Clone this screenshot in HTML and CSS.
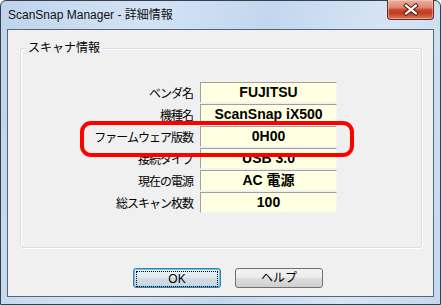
FILE: index.html
```html
<!DOCTYPE html>
<html lang="ja">
  <head>
    <meta charset="UTF-8" />
    <title>ScanSnap Manager - 詳細情報</title>
    <link rel="stylesheet" href="styles.css">
  </head>
  <body>
    <div class="window">
      <div class="titlebar">
        <span class="title">ScanSnap Manager - 詳細情報</span>
        <button class="close" aria-label="閉じる">
          <svg width="46" height="19" viewBox="0 0 46 19">
            <path d="M18.5 5.5 L28.5 13.5 M28.5 5.5 L18.5 13.5" stroke="#4a1a12" stroke-width="4.2" stroke-linecap="square" fill="none" />
            <path d="M18.5 5.5 L28.5 13.5 M28.5 5.5 L18.5 13.5" stroke="#ffffff" stroke-width="2.2" stroke-linecap="square" fill="none" />
          </svg>
        </button>
      </div>
      <div class="client">
        <div class="group">
          <span class="group-title">スキャナ情報</span>
          <div class="rows">
            <div class="label">ベンダ名</div>
            <div class="value">FUJITSU</div>
            <div class="label">機種名</div>
            <div class="value">ScanSnap iX500</div>
            <div class="label">ファームウェア版数</div>
            <div class="value">0H00</div>
            <div class="label">接続タイプ</div>
            <div class="value">USB 3.0</div>
            <div class="label">現在の電源</div>
            <div class="value">AC 電源</div>
            <div class="label">総スキャン枚数</div>
            <div class="value">100</div>
          </div>
        </div>
        <div class="buttons">
          <button class="btn btn-default"><span class="focus">OK</span></button>
          <button class="btn">ヘルプ</button>
        </div>
      </div>
      <div class="highlight"></div>
    </div>
  </body>
</html>
```

FILE: styles.css
```css
html, body {
  margin: 0;
  padding: 0;
  background-color: #ffffff;
}
body {
  font-family: "Liberation Sans", "Noto Sans CJK JP", sans-serif;
  font-size: 12px;
  color: #000;
}
.window {
  position: relative;
  width: 441px;
  height: 305px;
  box-sizing: border-box;
  border: 1px solid #3a3f47;
  border-radius: 6px 6px 0 0;
  padding: 0 6px 7px 6px;
  background: linear-gradient(100deg, #bed4ec 0%, #d3e3f5 30%, #c2d7ee 55%, #d6e5f5 80%, #c4d8ee 100%);
  display: flex;
  flex-direction: column;
}
.titlebar {
  height: 28px;
  display: flex;
  justify-content: space-between;
  align-items: flex-start;
}
.title {
  margin-left: 1px;
  line-height: 28px;
  font-size: 12px;
  color: #111;
}
.close {
  margin-top: -1px;
  width: 47px;
  height: 20px;
  padding: 0;
  border: 1px solid #6b2a20;
  border-top: none;
  border-radius: 0 0 4px 4px;
  background: linear-gradient(#eab0a3 0%, #dd8773 40%, #c8452b 52%, #c23d22 70%, #dc7a5e 100%);
  box-shadow: inset 0 0 0 1px rgba(255, 220, 210, 0.45);
  display: flex;
}
.close svg {
  display: block;
}
.client {
  flex: 1;
  border: 1px solid #56657a;
  background-color: #f0f0f0;
  display: flex;
  flex-direction: column;
}
.group {
  position: relative;
  margin: 18px 11px 0 12px;
  height: 200px;
  box-sizing: border-box;
  border: 1px solid #d5dfe5;
  border-radius: 3px;
  box-shadow: inset 1px 1px 0 #ffffff, 1px 1px 0 #ffffff;
}
.group-title {
  position: absolute;
  top: -9px;
  left: 5px;
  padding: 0 2px;
  line-height: 16px;
  font-size: 12px;
  background-color: #f0f0f0;
}
.rows {
  display: grid;
  grid-template-columns: 172px 137px;
  grid-auto-rows: 21px;
  column-gap: 7px;
  row-gap: 1px;
  padding-top: 33px;
}
.label {
  text-align: right;
  font-family: "Noto Sans CJK JP", sans-serif;
  font-size: 12px;
  letter-spacing: -1px;
  line-height: 21px;
}
.value {
  box-sizing: border-box;
  border: 1px solid;
  border-color: #a0a0a0 #f4f4f4 #f4f4f4 #a0a0a0;
  background-color: #ffffe1;
  text-align: center;
  font-weight: bold;
  font-size: 14px;
  line-height: 19px;
}
.buttons {
  display: flex;
  gap: 14px;
  margin-top: 20px;
  padding-left: 125px;
}
.btn {
  width: 88px;
  height: 20px;
  padding: 0;
  border: 1px solid #707070;
  border-radius: 3px;
  background: linear-gradient(#f2f2f2 0%, #ebebeb 48%, #dddddd 52%, #cfcfcf 100%);
  font-family: "Liberation Sans", "Noto Sans CJK JP", sans-serif;
  font-size: 12px;
  line-height: 16px;
  color: #000;
}
.btn-default {
  border-color: #3c7fb1;
  box-shadow: inset 0 0 0 1px #5ec8f5;
  background: linear-gradient(#eaf1f7 0%, #e1e9f0 48%, #d3dde6 52%, #c9d4de 100%);
  padding: 2px;
}
.focus {
  display: block;
  height: 14px;
  border: 1px dotted #000;
  line-height: 14px;
}
.highlight {
  position: absolute;
  left: 79px;
  top: 120px;
  width: 274px;
  height: 36px;
  box-sizing: border-box;
  border: 4px solid #ff0000;
  border-radius: 11px;
}
```
